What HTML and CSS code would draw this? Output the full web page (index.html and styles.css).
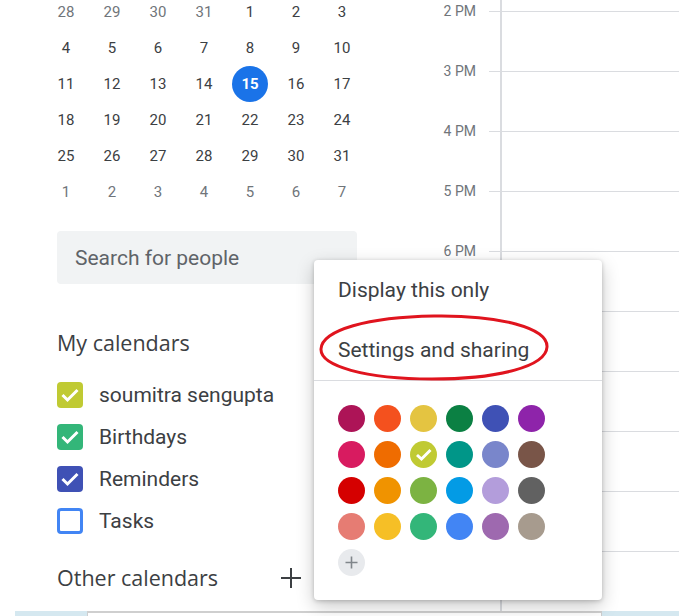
FILE: index.html
```html
<!DOCTYPE html>
<html lang="en">
<head>
    <meta charset="UTF-8">
    <meta name="viewport" content="width=device-width, initial-scale=1.0">
    <title>Calendar - Settings and sharing</title>
    <link rel="stylesheet" href="styles.css">
</head>
<body>
    <div class="app">
        <aside class="sidebar">
            <div class="mini-cal">
                <span class="day muted">28</span><span class="day muted">29</span><span class="day muted">30</span><span class="day muted">31</span><span class="day">1</span><span class="day">2</span><span class="day">3</span>
                <span class="day">4</span><span class="day">5</span><span class="day">6</span><span class="day">7</span><span class="day">8</span><span class="day">9</span><span class="day">10</span>
                <span class="day">11</span><span class="day">12</span><span class="day">13</span><span class="day">14</span><span class="day"><span class="today">15</span></span><span class="day">16</span><span class="day">17</span>
                <span class="day">18</span><span class="day">19</span><span class="day">20</span><span class="day">21</span><span class="day">22</span><span class="day">23</span><span class="day">24</span>
                <span class="day">25</span><span class="day">26</span><span class="day">27</span><span class="day">28</span><span class="day">29</span><span class="day">30</span><span class="day">31</span>
                <span class="day muted">1</span><span class="day muted">2</span><span class="day muted">3</span><span class="day muted">4</span><span class="day muted">5</span><span class="day muted">6</span><span class="day muted">7</span>
            </div>

            <div class="search">Search for people</div>

            <h2 class="section-title my-title">My calendars</h2>
            <ul class="cal-list">
                <li class="cal-item">
                    <span class="check citron"><svg viewBox="0 0 26 26"><polyline points="5.5,13 10.5,18 20.5,8"/></svg></span>
                    soumitra sengupta
                </li>
                <li class="cal-item">
                    <span class="check sage"><svg viewBox="0 0 26 26"><polyline points="5.5,13 10.5,18 20.5,8"/></svg></span>
                    Birthdays
                </li>
                <li class="cal-item">
                    <span class="check blueberry"><svg viewBox="0 0 26 26"><polyline points="5.5,13 10.5,18 20.5,8"/></svg></span>
                    Reminders
                </li>
                <li class="cal-item">
                    <span class="check empty"></span>
                    Tasks
                </li>
            </ul>

            <div class="other-row">
                <h2 class="section-title">Other calendars</h2>
                <svg class="add-icon" viewBox="0 0 20 20"><path d="M10 0v20M0 10h20"/></svg>
            </div>
        </aside>

        <main class="day-view">
            <div class="times">
                <div class="hour">2 PM</div>
                <div class="hour">3 PM</div>
                <div class="hour">4 PM</div>
                <div class="hour">5 PM</div>
                <div class="hour">6 PM</div>
                <div class="hour">7 PM</div>
                <div class="hour">8 PM</div>
                <div class="hour">9 PM</div>
                <div class="hour">10 PM</div>
                <div class="hour">11 PM</div>
            </div>
            <div class="grid">
                <div class="day-col"></div>
            </div>
        </main>
    </div>

    <div class="strip">
        <span class="strip-edge"></span>
        <span class="strip-blue"></span>
        <span class="strip-box"></span>
        <span class="strip-blue grow"></span>
    </div>

    <!-- calendar options menu -->
    <div class="menu">
        <div class="menu-item">Display this only</div>
        <div class="menu-item">Settings and sharing</div>
        <div class="menu-divider"></div>
        <div class="swatches">
            <span class="swatch" style="background:#ad1457"></span>
            <span class="swatch" style="background:#f4511e"></span>
            <span class="swatch" style="background:#e4c441"></span>
            <span class="swatch" style="background:#0b8043"></span>
            <span class="swatch" style="background:#3f51b5"></span>
            <span class="swatch" style="background:#8e24aa"></span>

            <span class="swatch" style="background:#d81b60"></span>
            <span class="swatch" style="background:#ef6c00"></span>
            <span class="swatch selected" style="background:#c0ca33"><svg viewBox="0 0 27 27"><polyline points="7,14 11.5,18 20.5,9"/></svg></span>
            <span class="swatch" style="background:#009688"></span>
            <span class="swatch" style="background:#7986cb"></span>
            <span class="swatch" style="background:#795548"></span>

            <span class="swatch" style="background:#d50000"></span>
            <span class="swatch" style="background:#f09300"></span>
            <span class="swatch" style="background:#7cb342"></span>
            <span class="swatch" style="background:#039be5"></span>
            <span class="swatch" style="background:#b39ddb"></span>
            <span class="swatch" style="background:#616161"></span>

            <span class="swatch" style="background:#e67c73"></span>
            <span class="swatch" style="background:#f6bf26"></span>
            <span class="swatch" style="background:#33b679"></span>
            <span class="swatch" style="background:#4285f4"></span>
            <span class="swatch" style="background:#9e69af"></span>
            <span class="swatch" style="background:#a79b8e"></span>

            <span class="swatch add"><svg viewBox="0 0 27 27"><path d="M13.5 7.5v12M7.5 13.5h12"/></svg></span>
        </div>
    </div>

    <!-- red marker drawn round the menu item -->
    <svg class="annotation" viewBox="0 0 679 616">
        <path d="M434 316 C 500 315, 548 328, 547 347 C 546 366, 500 379, 432 379 C 365 379, 320 366, 321 349 C 322 330, 368 317, 434 316 Z"/>
    </svg>
</body>
</html>
```

FILE: styles.css
```css
body {
    margin: 0;
    width: 679px;
    height: 616px;
    overflow: hidden;
    position: relative;
    background: #fff;
    font-family: Roboto, Arial, sans-serif;
    color: #3c4043;
}
.app {
    display: flex;
    height: 611px;
    overflow: hidden;
}
.sidebar {
    width: 420px;
    flex-shrink: 0;
    padding-left: 57px;
    box-sizing: border-box;
}
.mini-cal {
    display: grid;
    grid-template-columns: repeat(7, 46px);
    grid-auto-rows: 36px;
    margin: -6px 0 0 -14px;
    font-size: 15px;
}
.day {
    display: flex;
    align-items: center;
    justify-content: center;
    color: #3c4043;
}
.day.muted {
    color: #70757a;
}
.today {
    width: 36px;
    height: 36px;
    border-radius: 50%;
    background: #1a73e8;
    color: #fff;
    font-weight: bold;
    display: flex;
    align-items: center;
    justify-content: center;
}
.search {
    margin-top: 21px;
    width: 300px;
    height: 53px;
    line-height: 55px;
    padding-left: 18px;
    box-sizing: border-box;
    background: #f1f3f4;
    border-radius: 4px;
    font-size: 21px;
    color: #5f6368;
}
.section-title {
    margin: 0;
    font-family: "Open Sans", Roboto, sans-serif;
    font-weight: normal;
    font-size: 21.5px;
    line-height: 42px;
    color: #3c4043;
}
.my-title {
    margin-top: 38px;
}
.cal-list {
    list-style: none;
    margin: 10px 0 0;
    padding: 0;
}
.cal-item {
    height: 42px;
    display: flex;
    align-items: center;
    gap: 16px;
    font-size: 21px;
}
.check {
    width: 26px;
    height: 26px;
    border-radius: 4px;
    box-sizing: border-box;
    display: flex;
}
.check svg {
    width: 26px;
    height: 26px;
}
.check polyline {
    fill: none;
    stroke: #fff;
    stroke-width: 3;
}
.citron { background: #c0ca33; }
.sage { background: #33b679; }
.blueberry { background: #3f51b5; }
.check.empty {
    border: 3px solid #4285f4;
}
.other-row {
    margin-top: 15px;
    width: 244px;
    display: flex;
    align-items: center;
    justify-content: space-between;
}
.add-icon {
    width: 20px;
    height: 20px;
}
.add-icon path {
    stroke: #3c4043;
    stroke-width: 2;
}
.day-view {
    flex: 1;
    display: flex;
}
.times {
    width: 69px;
    padding-right: 13px;
    box-sizing: border-box;
    margin-top: -19px;
    font-size: 14px;
    color: #70757a;
    text-align: right;
}
.hour {
    height: 60px;
    line-height: 60px;
}
.grid {
    flex: 1;
    background-image: linear-gradient(#dadce0 1px, transparent 1px);
    background-size: 100% 60px;
    background-position: 0 11px;
}
.day-col {
    margin-left: 11px;
    height: 100%;
    border-left: 2px solid #dadce0;
}
.strip {
    display: flex;
    height: 5px;
}
.strip-edge {
    width: 15px;
}
.strip-blue {
    width: 72px;
    background: #d5e8f0;
}
.strip-blue.grow {
    flex: 1;
}
.strip-box {
    width: 515px;
    border-top: 2px solid #cfcfcf;
    border-left: 1px solid #cfcfcf;
    border-right: 1px solid #cfcfcf;
    box-sizing: border-box;
}
.menu {
    position: absolute;
    left: 314px;
    top: 260px;
    width: 288px;
    height: 340px;
    background: #fff;
    border-radius: 4px;
    box-shadow: 0 6px 18px rgba(0, 0, 0, 0.22), 0 1px 4px rgba(0, 0, 0, 0.2);
}
.menu-item {
    height: 60px;
    line-height: 60px;
    padding: 0 24px;
    font-size: 21px;
    color: #3c4043;
}
.menu-divider {
    height: 1px;
    background: #dadce0;
}
.swatches {
    display: grid;
    grid-template-columns: repeat(6, 36px);
    grid-auto-rows: 36px;
    padding: 19px 19px 20px;
}
.swatch {
    width: 27px;
    height: 27px;
    margin: 4.5px;
    border-radius: 50%;
    display: flex;
}
.swatch svg {
    width: 27px;
    height: 27px;
}
.swatch.selected polyline {
    fill: none;
    stroke: #fff;
    stroke-width: 3;
}
.swatch.add {
    background: #e8eaed;
}
.swatch.add path {
    stroke: #80868b;
    stroke-width: 1.6;
}
.annotation {
    position: absolute;
    left: 0;
    top: 0;
    width: 679px;
    height: 616px;
    pointer-events: none;
}
.annotation path {
    fill: none;
    stroke: #e0141e;
    stroke-width: 3;
}
```
